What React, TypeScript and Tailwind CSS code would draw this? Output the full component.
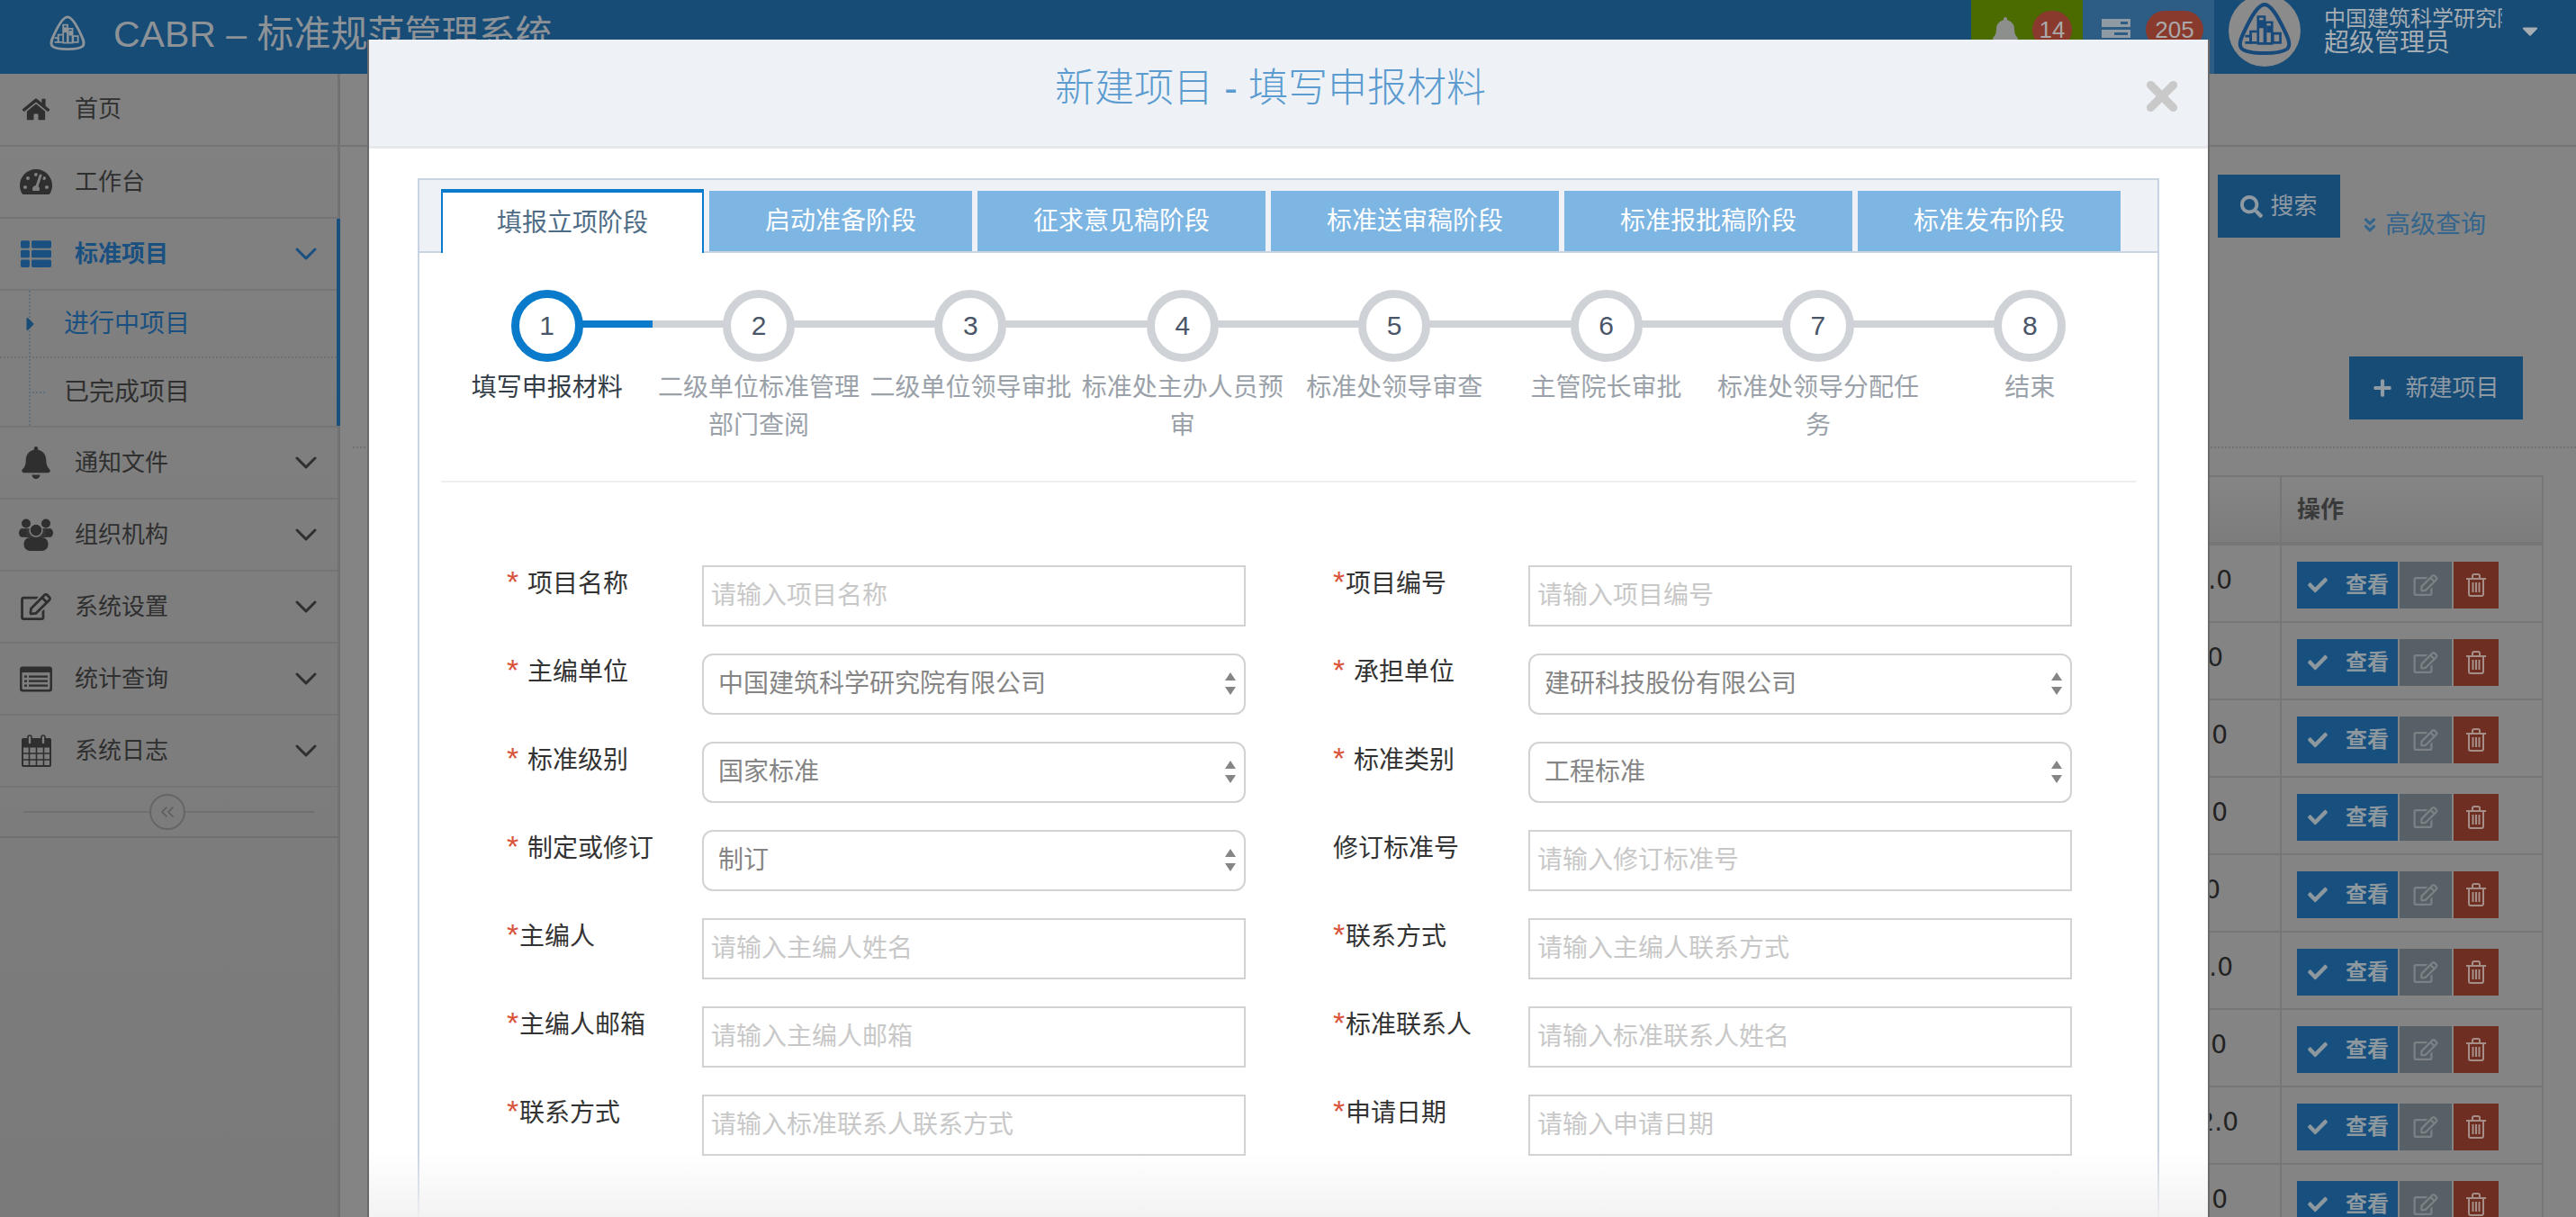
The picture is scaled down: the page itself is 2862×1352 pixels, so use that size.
import {
  FaBell,
  FaCheck,
  FaHome,
  FaThList,
  FaPlus,
  FaRegEdit,
  FaSearch,
  FaTachometerAlt,
  FaAngleDoubleDown,
  FaCaretRight,
  FaCaretDown,
} from "react-icons/fa";
import { ChevronDown, ChevronsLeft, X } from "lucide-react";
import type { ReactNode } from "react";

const FONT = "font-['Liberation_Sans','Noto_Sans_CJK_SC',sans-serif]";

// building mark used in the header and the user avatar
function Logo({ className, color }: { className: string; color: string }) {
  return (
    <svg viewBox="0 0 64 64" className={className} fill="none" stroke={color}>
      <path
        d="M32 4C38 4 44 13 50 25C56 37 61 46 57 51C50 58 14 58 7 51C3 46 8 37 14 25C20 13 26 4 32 4Z"
        strokeWidth="4"
      />
      <g strokeWidth="2.6">
        <path d="M25 17h7v29h-7zM33 23h7v23h-7z" />
        <path d="M27.5 22h2.5v6h-2.5zM35.5 28h2.5v5h-2.5z" />
        <path d="M24 33h-7v12h7M41 35h8v10h-8z" />
        <path d="M11 38h6v7h-6" />
      </g>
    </svg>
  );
}

function ServerIcon() {
  return (
    <svg viewBox="0 0 32 36" className="h-[36px] w-[32px]" fill="#8f9aa3">
      <path d="M0 0h32v9H0zM0 12h32v9H0zM0 24h32v9H0z" />
      <path d="M21 3h8v3h-8zM14 15h15v3H14zM21 27h8v3h-8z" fill="#2d5c85" />
    </svg>
  );
}

function TrashIcon() {
  return (
    <svg viewBox="0 0 24 26" className="h-[28px] w-[24px]" fill="none" stroke="#a58d88" strokeWidth="2">
      <path d="M1 6h22M8 6V2.5C8 1.5 9 1 10 1h4c1 0 2 .5 2 1.5V6" />
      <path d="M4 6v17c0 1 1 2 2 2h12c1 0 2-1 2-2V6" />
      <path d="M8.5 10v11M12 10v11M15.5 10v11" />
    </svg>
  );
}

function UsersIcon() {
  return (
    <svg viewBox="0 0 38 36" className="h-[36px] w-[38px]" fill="#2f2f2f">
      <circle cx="8" cy="5.5" r="5" />
      <circle cx="30" cy="5.5" r="5" />
      <ellipse cx="4" cy="16" rx="4" ry="5" />
      <ellipse cx="34" cy="16" rx="4" ry="5" />
      <path d="M6 11h26v10H6z" opacity="0.9" />
      <circle cx="19" cy="13" r="7" stroke="#7f7f7f" strokeWidth="1.5" />
      <rect x="5.5" y="21" width="27" height="15" rx="7" />
    </svg>
  );
}

function ListAltIcon() {
  return (
    <svg viewBox="0 0 36 28" className="h-[29px] w-[36px]" fill="#2f2f2f">
      <path
        fillRule="evenodd"
        d="M3 0h30a3 3 0 0 1 3 3v22a3 3 0 0 1-3 3H3a3 3 0 0 1-3-3V3a3 3 0 0 1 3-3zM2.5 6.5V24a1.5 1.5 0 0 0 1.5 1.5h28a1.5 1.5 0 0 0 1.5-1.5V6.500z"
      />
      <path d="M5 10h3v2.200H5zM10 10h21v2.200H10zM5 15h3v2.200H5zM10 15h21v2.200H10zM5 20h3v2.200H5zM10 20h21v2.200H10z" />
    </svg>
  );
}

function CalendarIcon() {
  return (
    <svg viewBox="0 0 33 36" className="h-[36px] w-[33px]" fill="none" stroke="#2f2f2f">
      <path d="M2 5h29a1 1 0 0 1 1 1v28a1 1 0 0 1-1 1H2a1 1 0 0 1-1-1V6a1 1 0 0 1 1-1z" strokeWidth="2" />
      <path d="M1 5h31v9H1z" fill="#2f2f2f" strokeWidth="1" />
      <path d="M1 21h31M1 28h31M8.500 14v21M16.500 14v21M24.500 14v21" strokeWidth="1.600" />
      <rect x="7" y="1" width="4" height="10" rx="2" fill="#7f7f7f" strokeWidth="1.600" />
      <rect x="22" y="1" width="4" height="10" rx="2" fill="#7f7f7f" strokeWidth="1.600" />
    </svg>
  );
}

type NavItem = { label: string; icon: ReactNode; arrow?: boolean; first?: boolean };

const navTop: NavItem[] = [
  { label: "首页", icon: <FaHome className="h-[27px] w-[32px]" />, first: true },
  { label: "工作台", icon: <FaTachometerAlt className="h-[32px] w-[36px]" /> },
];

const navBottom: NavItem[] = [
  { label: "通知文件", icon: <FaBell className="h-[36px] w-[32px]" />, arrow: true },
  { label: "组织机构", icon: <UsersIcon />, arrow: true },
  { label: "系统设置", icon: <FaRegEdit className="h-[30px] w-[36px]" />, arrow: true },
  { label: "统计查询", icon: <ListAltIcon />, arrow: true },
  { label: "系统日志", icon: <CalendarIcon />, arrow: true },
];

function NavRow({ item }: { item: NavItem }) {
  return (
    <div
      className={`flex items-center border-b-2 border-[#757575] pl-[20px] pr-[15px] text-[26px] text-[#2f2f2f] ${
        item.first ? "h-[81px]" : "h-[80px]"
      }`}
    >
      <span className="flex w-[40px] justify-center">{item.icon}</span>
      <span className="ml-[23px] flex-1">{item.label}</span>
      {item.arrow && <ChevronDown className="h-[40px] w-[40px]" strokeWidth={1.8} />}
    </div>
  );
}

function Sidebar() {
  return (
    <aside className="flex w-[378px] shrink-0 flex-col border-r-[3px] border-[#727272] bg-gradient-to-b from-[#818181] to-[#7a7a7a]">
      {navTop.map((item) => (
        <NavRow key={item.label} item={item} />
      ))}
      <div className="relative -mr-[3px] border-r-[4px] border-[#1a5080]">
        <div className="flex h-[80px] items-center border-b-2 border-[#757575] pl-[20px] pr-[14px] text-[26px] font-bold text-[#1a5080]">
          <span className="flex w-[40px] justify-center">
            <FaThList className="h-[34px] w-[36px]" />
          </span>
          <span className="ml-[23px] flex-1">标准项目</span>
          <ChevronDown className="h-[40px] w-[40px]" strokeWidth={1.8} />
        </div>
        <div className="relative text-[28px]">
          <div className="absolute bottom-0 left-[32px] top-0 border-l-2 border-dotted border-[#5f6f7c]" />
          <div className="flex h-[75px] items-center border-b-2 border-dotted border-[#707070] pl-[71px] text-[#1a5080]">
            <FaCaretRight className="absolute left-[22px] h-[24px] w-[24px] text-[#174c77]" />
            进行中项目
          </div>
          <div className="flex h-[75px] items-center pl-[71px] text-[#303030]">
            <span className="absolute left-[36px] w-[14px] border-t-2 border-dotted border-[#5f6f7c]" />
            已完成项目
          </div>
        </div>
      </div>
      <div className="border-t-2 border-[#757575]" />
      {navBottom.map((item) => (
        <NavRow key={item.label} item={item} />
      ))}
      <div className="relative flex h-[56px] items-center justify-center border-b-2 border-[#6f6f6f]">
        <div className="mx-[26px] w-full border-t-2 border-[#707070]" />
        <span className="absolute left-[166px] flex h-[40px] w-[40px] items-center justify-center rounded-full border-2 border-[#666666] bg-[#7c7c7c]">
          <ChevronsLeft className="h-[24px] w-[24px] text-[#5c5c5c]" strokeWidth={1.6} />
        </span>
      </div>
    </aside>
  );
}

function Header() {
  return (
    <header className="flex h-[82px] shrink-0 items-stretch bg-[#174c77]">
      <div className="flex flex-1 items-center pb-[6px] pl-[53px]">
        <Logo className="h-[46px] w-[44px]" color="#8d949a" />
        <span className="ml-[29px] text-[41px] leading-none text-[#8d9297]">CABR – 标准规范管理系统</span>
      </div>
      <div className="flex w-[124px] items-start bg-[#4b6b00] pl-[24px] pt-[12px]">
        <FaBell className="mt-[6px] h-[34px] w-[28px] text-[#8d8f8d]" />
        <span className="ml-[16px] flex h-[42px] w-[44px] items-center justify-center rounded-full bg-[#8a3a2c] text-[26px] text-[#a9a9a9]">
          14
        </span>
      </div>
      <div className="flex w-[146px] items-start bg-[#2d5c85] pl-[21px] pt-[12px]">
        <span className="mt-[9px]">
          <ServerIcon />
        </span>
        <span className="ml-[17px] flex h-[42px] w-[64px] items-center justify-center rounded-full bg-[#8a3a2c] text-[26px] text-[#a9a9a9]">
          205
        </span>
      </div>
      <div className="relative flex flex-1 grow-0 basis-[402px] items-stretch">
        <div className="absolute left-[16px] top-[-6px] flex h-[80px] w-[80px] items-center justify-center rounded-full bg-[#8b8b8b]">
          <Logo className="h-[66px] w-[66px]" color="#17497a" />
        </div>
        <div className="ml-[122px] flex w-[198px] flex-col overflow-hidden pt-[8px] text-[#a6adb3]">
          <span className="whitespace-nowrap text-[24px] leading-[26px]">中国建筑科学研究院有限公司</span>
          <span className="whitespace-nowrap text-[28px] leading-[28px]">超级管理员</span>
        </div>
        <FaCaretDown className="ml-[19px] mt-[20px] h-[28px] w-[24px] text-[#a6adb3]" />
      </div>
    </header>
  );
}

const versions = [
  { text: "1.0", cls: "pr-[53px]" },
  { text: "1.0", cls: "pr-[63px]" },
  { text: "1.0", cls: "pr-[58px]" },
  { text: "1.0", cls: "pr-[58px]" },
  { text: "1.0", cls: "pr-[66px]" },
  { text: "1.0", cls: "pr-[52px]" },
  { text: "1.0", cls: "pr-[59px]" },
  { text: "2.0", cls: "pr-[46px]" },
  { text: "1.0", cls: "pr-[58px]" },
];

function MainContent() {
  return (
    <main className="flex min-w-0 flex-1 flex-col bg-[#848484]">
      <div className="h-[81px] shrink-0 border-b-2 border-[#757575]" />
      <div className="mt-[31px] flex h-[70px] shrink-0 items-start pl-[2086px]">
        <button className="flex h-[70px] w-[136px] items-center justify-center gap-[8px] bg-[#174c77] text-[26px] text-[#8f9aa3]">
          <FaSearch className="h-[25px] w-[25px]" />
          搜索
        </button>
        <span className="ml-[24px] mt-[42px] flex items-center text-[28px] leading-none text-[#34658c]">
          <FaAngleDoubleDown className="mr-[8px] h-[20px] w-[18px]" />
          高级查询
        </span>
      </div>
      <div className="mt-[132px] flex shrink-0 justify-end pr-[59px]">
        <button className="flex h-[70px] w-[193px] items-center justify-center gap-[14px] bg-[#174c77] text-[26px] text-[#8f9aa3]">
          <FaPlus className="h-[22px] w-[22px]" />
          新建项目
        </button>
      </div>
      <div className="ml-[14px] mt-[30px] shrink-0 border-t-2 border-dotted border-[#717171]" />
      <div className="ml-[40px] mr-[36px] mt-[30px] border-l-2 border-[#767676]">
        <div className="flex h-[78px] border-y-2 border-b-[4px] border-[#767676] bg-gradient-to-b from-[#858585] to-[#7c7c7c]">
          <div className="flex-1 border-r-2 border-[#767676]" />
          <div className="flex w-[291px] items-center border-r-2 border-[#767676] pl-[17px] text-[26px] font-bold text-[#3a3a3a]">
            操作
          </div>
        </div>
        {versions.map((v, i) => (
          <div key={i} className="flex h-[86px] border-b-2 border-[#767676]">
            <div
              className={`flex flex-1 items-center justify-end border-r-2 border-[#767676] pb-[6px] font-['DejaVu_Sans',sans-serif] text-[28px] text-[#222222] ${v.cls}`}
            >
              {v.text}
            </div>
            <div className="flex w-[291px] gap-[2px] border-r-2 border-[#767676] pl-[17px] pt-[18px]">
              <button className="flex h-[52px] w-[112px] items-center justify-center gap-[18px] bg-[#17507f] text-[24px] font-bold text-[#8d979e]">
                <FaCheck className="h-[22px] w-[26px]" />
                查看
              </button>
              <button className="flex h-[52px] w-[58px] items-center justify-center bg-[#566066] text-[#7b8184]">
                <FaRegEdit className="h-[24px] w-[30px]" />
              </button>
              <button className="flex h-[52px] w-[50px] items-center justify-center bg-[#6f2e22]">
                <TrashIcon />
              </button>
            </div>
          </div>
        ))}
      </div>
    </main>
  );
}

const tabs = ["填报立项阶段", "启动准备阶段", "征求意见稿阶段", "标准送审稿阶段", "标准报批稿阶段", "标准发布阶段"];

const steps = [
  "填写申报材料",
  "二级单位标准管理部门查阅",
  "二级单位领导审批",
  "标准处主办人员预审",
  "标准处领导审查",
  "主管院长审批",
  "标准处领导分配任务",
  "结束",
];

function Stepper() {
  return (
    <div className="flex h-[214px] border-b-2 border-[#eeeeee]">
      {steps.map((label, i) => (
        <div key={label} className="relative flex flex-1 flex-col items-center">
          {i < steps.length - 1 && (
            <div className="absolute left-1/2 top-[34px] flex h-[8px] w-full">
              <div className={`w-1/2 ${i === 0 ? "bg-[#0a7acb]" : "bg-[#cfd2d6]"}`} />
              <div className="w-1/2 bg-[#cfd2d6]" />
            </div>
          )}
          <div
            className={`relative flex h-[80px] w-[80px] items-center justify-center rounded-full border-[9px] bg-white pb-[2px] text-[30px] text-[#4a5568] ${
              i === 0 ? "border-[#0a7acb]" : "border-[#cfd2d6]"
            }`}
          >
            {i + 1}
          </div>
          <div className={`mt-[8px] text-center text-[28px] leading-[42px] ${i === 0 ? "text-[#333d47]" : "text-[#9aa1a9]"}`}>
            {label}
          </div>
        </div>
      ))}
    </div>
  );
}

type Field = { star: "" | "tight" | "wide"; label: string; placeholder?: string; value?: string };

const fields: Field[] = [
  { star: "wide", label: "项目名称", placeholder: "请输入项目名称" },
  { star: "tight", label: "项目编号", placeholder: "请输入项目编号" },
  { star: "wide", label: "主编单位", value: "中国建筑科学研究院有限公司" },
  { star: "wide", label: "承担单位", value: "建研科技股份有限公司" },
  { star: "wide", label: "标准级别", value: "国家标准" },
  { star: "wide", label: "标准类别", value: "工程标准" },
  { star: "wide", label: "制定或修订", value: "制订" },
  { star: "", label: "修订标准号", placeholder: "请输入修订标准号" },
  { star: "tight", label: "主编人", placeholder: "请输入主编人姓名" },
  { star: "tight", label: "联系方式", placeholder: "请输入主编人联系方式" },
  { star: "tight", label: "主编人邮箱", placeholder: "请输入主编人邮箱" },
  { star: "tight", label: "标准联系人", placeholder: "请输入标准联系人姓名" },
  { star: "tight", label: "联系方式", placeholder: "请输入标准联系人联系方式" },
  { star: "tight", label: "申请日期", placeholder: "请输入申请日期" },
];

function FormField({ field }: { field: Field }) {
  return (
    <div className="flex h-[68px]">
      <label className="w-[217px] shrink-0 text-[28px] leading-[42px] text-[#333333]">
        {field.star && (
          <span className={`inline-block text-[34px] leading-none text-[#d9533a] ${field.star === "wide" ? "w-[23px]" : "w-[14px]"}`}>
            *
          </span>
        )}
        {field.label}
      </label>
      {field.value ? (
        <div className="relative h-[68px] w-[604px]">
          <select
            defaultValue={field.value}
            className="h-full w-full appearance-none rounded-[12px] border-2 border-[#d2d2d2] bg-white pl-[16px] text-[28px] text-[#858585] outline-none"
          >
            <option>{field.value}</option>
          </select>
          <svg viewBox="0 0 14 25" className="absolute right-[10px] top-[21px] h-[25px] w-[14px]" fill="#858585">
            <path d="M7 0l6 9H1zM7 25l-6-9h12z" />
          </svg>
        </div>
      ) : (
        <input
          placeholder={field.placeholder}
          className="h-[68px] w-[604px] border-2 border-[#d2d2d2] bg-white pl-[8px] text-[28px] outline-none placeholder:text-[#c8c8c8]"
        />
      )}
    </div>
  );
}

function Modal() {
  return (
    <div className="absolute bottom-[-60px] left-[408px] top-[44px] flex w-[2047px] flex-col overflow-hidden border-x-2 border-[#6a6a6a] bg-white">
      <div className="relative flex h-[121px] shrink-0 items-center justify-center border-b-[3px] border-[#e6e8eb] bg-[#eef2f7] pb-[10px] pr-[40px]">
        <h2 className="text-[44px] font-light text-[#5b9bcf]">新建项目 - 填写申报材料</h2>
        <X className="absolute right-[26px] top-[38px] h-[50px] w-[50px] text-[#c9c9c9]" strokeWidth={4.4} />
      </div>
      <div className="mx-[54px] mt-[33px] flex-1 border-2 border-b-0 border-[#c9d4e3]">
        <div className="flex h-[81px] items-end gap-[6px] border-b-2 border-[#c9d4e3] bg-[#eef2f7] pl-[24px]">
          {tabs.map((tab, i) =>
            i === 0 ? (
              <div
                key={tab}
                className="-mb-[2px] flex h-[71px] w-[292px] items-center justify-center border-x-2 border-b-0 border-t-[4px] border-[#0a7acb] bg-white text-[28px] text-[#4f6c86]"
              >
                {tab}
              </div>
            ) : (
              <div key={tab} className="flex h-[67px] items-center bg-[#7db5e3] px-[62px] text-[28px] text-white">
                {tab}
              </div>
            ),
          )}
        </div>
        <div className="mx-[24px] mt-[41px]">
          <Stepper />
        </div>
        <div className="ml-[97px] mt-[92px] grid grid-cols-[918px_917px] gap-y-[30px]">
          {fields.map((field) => (
            <FormField key={field.label + field.star + (field.placeholder ?? "")} field={field} />
          ))}
        </div>
      </div>
      <div className="pointer-events-none absolute bottom-[60px] left-0 h-[72px] w-full bg-gradient-to-b from-transparent to-[#f1f1f1]/90" />
    </div>
  );
}

export default function App() {
  return (
    <div className={`relative flex h-[1352px] w-[2862px] flex-col overflow-hidden bg-[#848484] ${FONT}`}>
      <Header />
      <div className="flex min-h-0 flex-1">
        <Sidebar />
        <MainContent />
      </div>
      <Modal />
    </div>
  );
}
